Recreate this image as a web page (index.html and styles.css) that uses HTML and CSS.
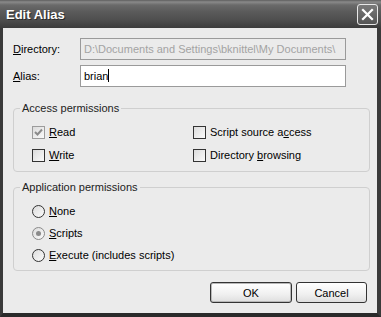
FILE: index.html
```html
<!DOCTYPE html>
<html lang="en">
<head>
  <meta charset="UTF-8">
  <title>Edit Alias</title>
  <link rel="stylesheet" href="styles.css">
</head>
<body>

  <div class="window">
    <div class="titlebar">
      <span class="title">Edit Alias</span>
      <button class="close-btn" aria-label="Close">
        <svg width="13" height="13" viewBox="0 0 13 13">
          <path d="M2 2 L11 11 M11 2 L2 11" stroke="#fff" stroke-width="2.2" stroke-linecap="square"/>
        </svg>
      </button>
    </div>

    <div class="content">
      <div class="form-row">
        <label class="row-label"><u>D</u>irectory:</label>
        <div class="textbox disabled">D:\Documents and Settings\bknittel\My Documents\</div>
      </div>
      <div class="form-row alias-row">
        <label class="row-label"><u>A</u>lias:</label>
        <div class="textbox">brian<span class="caret"></span></div>
      </div>

      <fieldset class="group access">
        <legend>Access permissions</legend>
        <div class="option-grid">
          <div class="option"><span class="check checked dim">
            <svg width="9" height="9" viewBox="0 0 9 9"><path d="M1 4 L3.5 6.5 L8 1.5" fill="none" stroke="#8a8a8a" stroke-width="2"/></svg>
          </span><span><u>R</u>ead</span></div>
          <div class="option"><span class="check"></span><span>Script source a<u>c</u>cess</span></div>
          <div class="option"><span class="check"></span><span><u>W</u>rite</span></div>
          <div class="option"><span class="check"></span><span>Directory <u>b</u>rowsing</span></div>
        </div>
      </fieldset>

      <fieldset class="group app">
        <legend>Application permissions</legend>
        <div class="option-list">
          <div class="option"><span class="radio"></span><span><u>N</u>one</span></div>
          <div class="option"><span class="radio selected"><span class="dot"></span></span><span><u>S</u>cripts</span></div>
          <div class="option"><span class="radio"></span><span><u>E</u>xecute (includes scripts)</span></div>
        </div>
      </fieldset>

      <div class="button-row">
        <button class="dlg-btn ok">OK</button>
        <button class="dlg-btn cancel">Cancel</button>
      </div>
    </div>
  </div>

</body>
</html>
```

FILE: styles.css
```css
html, body {
  margin: 0;
  padding: 0;
  background: #fff;
}

.window {
  width: 381px;
  height: 317px;
  display: flex;
  flex-direction: column;
  font-family: 'Liberation Sans', Arial, sans-serif;
  font-size: 11px;
  color: #000;
}

.titlebar {
  height: 28px;
  flex: none;
  display: flex;
  align-items: center;
  justify-content: space-between;
  padding: 0 3px 0 6px;
  background: linear-gradient(#5e5e5e 0, #8a8a8a 2px, #6a6a6a 5px, #5a5a5a 12px, #4e4e4e 20px, #3c3c3c 28px);
  box-sizing: border-box;
}

.title {
  color: #fff;
  font-weight: bold;
  font-size: 13px;
  text-shadow: 1px 1px 0 #2a2a2a;
  margin-top: 1px;
}

.close-btn {
  width: 21px;
  height: 21px;
  padding: 0;
  border: 1px solid #e8e8e8;
  border-radius: 3px;
  background: linear-gradient(#7a7a7a, #555);
  display: flex;
  align-items: center;
  justify-content: center;
  margin-top: 1px;
}

.content {
  flex: 1;
  background: #ebebeb;
  border-left: 3px solid #3a3a3a;
  border-right: 4px solid #3a3a3a;
  border-bottom: 4px solid #2a2a2a;
  padding: 10px 7px 0 10px;
}

.form-row {
  display: flex;
  align-items: center;
  height: 22px;
}

.alias-row {
  margin-top: 5px;
}

.row-label {
  width: 67px;
  flex: none;
}

.textbox {
  width: 266px;
  height: 22px;
  box-sizing: border-box;
  border: 1px solid #9a9a9a;
  background: #fff;
  padding: 0 3px;
  line-height: 20px;
  white-space: nowrap;
  overflow: hidden;
}

.textbox.disabled {
  background: #ebebeb;
  color: #a3a3a3;
}

.caret {
  display: inline-block;
  width: 1px;
  height: 13px;
  background: #000;
  vertical-align: -2px;
}

.group {
  margin: 0;
  width: 357px;
  box-sizing: border-box;
  border: 1px solid #cfcfcf;
  border-radius: 4px;
  padding: 6px 0 5px 0;
}

.group legend {
  padding: 0 2px;
  margin-left: 6px;
  line-height: 14px;
  color: #222;
}

.access {
  margin-top: 14px;
}

.app {
  margin-top: 8px;
  padding-top: 6px;
  padding-bottom: 4px;
}

.option-grid {
  display: grid;
  grid-template-columns: 161px 1fr;
  grid-auto-rows: 22px;
  row-gap: 1px;
  margin-left: 18px;
}

.option-list {
  display: flex;
  flex-direction: column;
  margin-left: 18px;
}

.option-list .option {
  height: 22px;
}

.option {
  display: flex;
  align-items: center;
}

.check {
  width: 13px;
  height: 13px;
  box-sizing: border-box;
  border: 1px solid #333;
  background: linear-gradient(135deg, #dcdcdc, #fafafa);
  margin-right: 4px;
  display: flex;
  align-items: center;
  justify-content: center;
  flex: none;
}

.check.dim {
  border-color: #9c9c9c;
}

.radio {
  width: 13px;
  height: 13px;
  box-sizing: border-box;
  border: 1px solid #333;
  border-radius: 50%;
  background: linear-gradient(135deg, #dcdcdc, #fafafa);
  margin-right: 4px;
  display: flex;
  align-items: center;
  justify-content: center;
  flex: none;
}

.radio.selected {
  border-color: #8a8a8a;
}

.dot {
  width: 5px;
  height: 5px;
  border-radius: 50%;
  background: #8a8a8a;
}

.button-row {
  display: flex;
  justify-content: flex-end;
  gap: 4px;
  margin-top: 11px;
  padding-right: 3px;
}

.dlg-btn {
  height: 21px;
  box-sizing: border-box;
  border: 1px solid #333;
  border-radius: 3px;
  background: linear-gradient(#fff, #f0f0f0 60%, #dedede);
  font-family: 'Liberation Sans', Arial, sans-serif;
  font-size: 11px;
  color: #000;
  padding: 0;
}

.dlg-btn.ok {
  width: 82px;
  box-shadow: inset 0 0 0 1px #b8b8b8;
}

.dlg-btn.cancel {
  width: 71px;
}
```
